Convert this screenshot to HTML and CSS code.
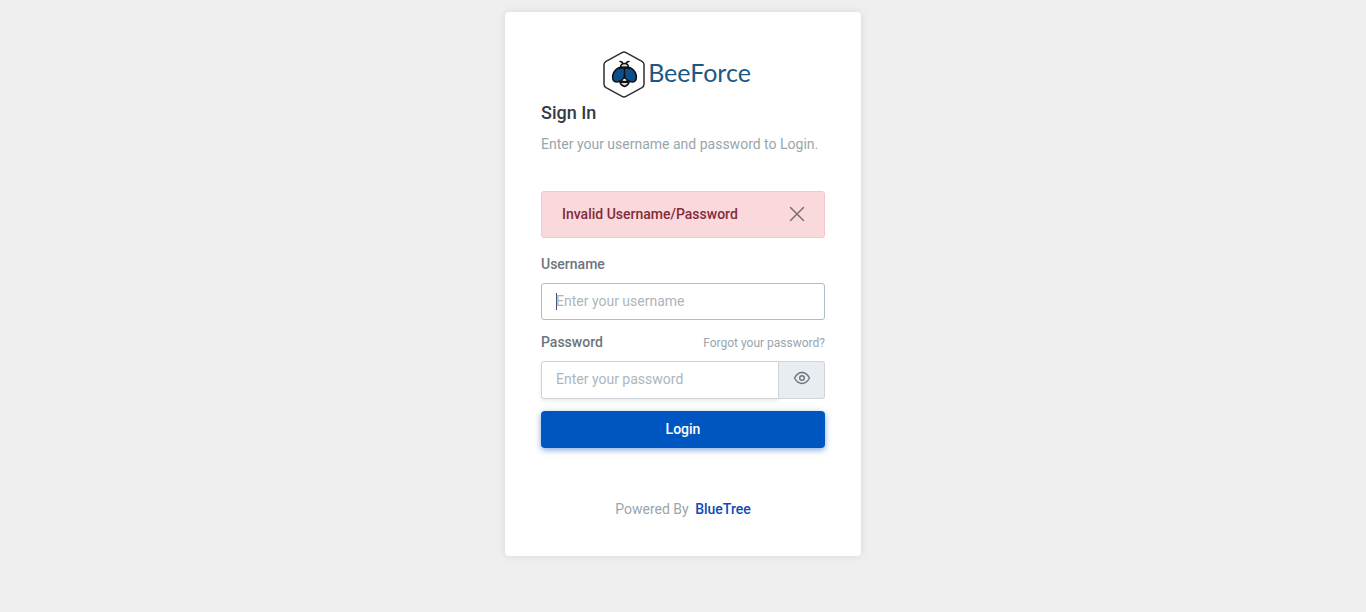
FILE: index.html
```html
<!DOCTYPE html>
<html lang="en">
<head>
<meta charset="utf-8">
<meta name="viewport" content="width=device-width, initial-scale=1">
<title>Sign In | BeeForce</title>
<link rel="stylesheet" href="styles.css">
</head>
<body>
<main class="card">
  <div class="logo">
    <svg class="logo-mark" viewBox="0 0 42 48" aria-hidden="true">
      <path d="M19 2.600Q21 1.500 23 2.600L39 11.400Q41 12.500 41 14.800V34.200Q41 36.500 39 37.600L23 46.400Q21 47.500 19 46.400L3 37.600Q1 36.500 1 34.200V14.800Q1 12.500 3 11.400Z" fill="#fff" stroke="#303033" stroke-width="1.500"/>
      <path d="M17 11.500Q19.500 11.500 20 14M26 11.500Q23.500 11.500 23 14" fill="none" stroke="#111" stroke-width="1.500" stroke-linecap="round"/>
      <path d="M17.500 17.500Q17.500 13.500 21.500 13.500Q25.500 13.500 25.500 17.500Z" fill="#ddd" stroke="#111" stroke-width="1.500"/>
      <path d="M17 28V32.500Q18 35.500 21.500 36.500Q25 35.500 26 32.500V28Z" fill="#ddd" stroke="#111" stroke-width="1.500"/>
      <path d="M17 32H26" stroke="#111" stroke-width="2"/>
      <path d="M21.500 18C15 15.500 10 21 9.600 27C9.400 31 12 32.200 15 31.800C18.500 31.200 21 28.500 21.500 26C22 28.500 24.500 31.200 28 31.800C31 32.200 33.600 31 33.400 27C33 21 28 15.500 21.500 18Z" fill="#0b4f8c" stroke="#111" stroke-width="1.500" stroke-linejoin="round"/>
      <path d="M16 18.500Q21.500 16.500 27 18.500" fill="none" stroke="#111" stroke-width="2"/>
      <path d="M21.500 18V26" stroke="#111" stroke-width="1.500"/>
      <path d="M20 30Q21.500 27.500 23 30Z" fill="#fff"/>
    </svg>
    <span class="logo-name">BeeForce</span>
  </div>
  <h1 class="title">Sign In</h1>
  <p class="intro">Enter your username and password to Login.</p>
  <div class="alert" role="alert">
    <strong class="alert-text">Invalid Username/Password</strong>
    <button class="alert-close" type="button" aria-label="Close">
      <svg class="close-icon" viewBox="0 0 16 16" aria-hidden="true"><path d="M1.500 1.500L14.500 14.500M14.500 1.500L1.500 14.500" fill="none" stroke="currentColor" stroke-width="1.500" stroke-linecap="round"/></svg>
    </button>
  </div>
  <form>
    <div class="label-row"><label for="username">Username</label></div>
    <input class="field" id="username" type="text" placeholder="Enter your username" autofocus>
    <div class="label-row">
      <label for="password">Password</label>
      <a class="forgot" href="#">Forgot your password?</a>
    </div>
    <div class="field-group">
      <input class="field field-joined" id="password" type="password" placeholder="Enter your password">
      <button class="reveal" type="button" aria-label="Show password">
        <svg class="eye-icon" viewBox="0 0 18 14" aria-hidden="true"><path d="M1.500 7Q4.500 1.500 9 1.500T16.500 7Q13.500 12.500 9 12.500T1.500 7Z" fill="none" stroke="currentColor" stroke-width="1.400" stroke-linejoin="round"/><circle cx="9" cy="7" r="2.300" fill="none" stroke="currentColor" stroke-width="1.400"/></svg>
      </button>
    </div>
    <button class="login" type="submit">Login</button>
  </form>
  <p class="powered">Powered By <a class="brand" href="#">BlueTree</a></p>
</main>
</body>
</html>
```
FILE: styles.css
```css
* { box-sizing: border-box; }

body {
  margin: 0;
  padding: 12px;
  background: #efefef;
  color: #6c757d;
  font: 14px/22px Roboto, sans-serif;
}

.card {
  max-width: 356px;
  margin: 0 auto;
  padding: 38px 36px 36px;
  background: #fff;
  border-radius: 4px;
  box-shadow: 0 0 8px rgba(0, 0, 0, .1);
}

.logo {
  display: flex;
  justify-content: center;
  gap: 3px;
  padding-right: 12px;
}

.logo-mark { width: 42px; height: 48px; }

.logo-name {
  color: #1d5785;
  font: 25px/44px Lato, sans-serif;
}

.title {
  margin: 4px 0 9px;
  color: #313a46;
  font-size: 18px;
  font-weight: 500;
  line-height: 22px;
}

.intro { margin: 0 0 36px; color: #98a6ad; }

.alert {
  display: flex;
  align-items: center;
  justify-content: space-between;
  margin-bottom: 15px;
  padding: 11px 19px 12px 20px;
  background: #fad9dd;
  border: 1px solid #f5c6cb;
  border-radius: 3px;
  color: #832b3a;
}

.alert-text { font-weight: 500; }

.alert-close {
  display: flex;
  padding: 0;
  background: none;
  border: 0;
  color: #7d6d6f;
}

.close-icon { width: 16px; height: 16px; }

.label-row {
  display: flex;
  align-items: baseline;
  justify-content: space-between;
  margin-bottom: 8px;
}

.label-row label { font-weight: 500; }

.forgot { color: #98a6ad; font-size: 12px; line-height: 20px; text-decoration: none; }

.field {
  display: block;
  width: 100%;
  height: 37px;
  margin: 0 0 11px;
  padding: 6px 14px 8px;
  background: #fff;
  border: 1px solid #ced4da;
  border-radius: 3px;
  color: #6c757d;
  font: inherit;
}

.field::placeholder { color: #adb5bd; opacity: 1; }

.field:focus {
  background: linear-gradient(#495057, #495057) 14px 9px / 1px 17px no-repeat #fff;
  border-color: #b1bbc4;
  caret-color: transparent;
  outline: 0;
}

.field-group { display: flex; height: 38px; margin-bottom: 12px; }

.field-joined {
  flex: 1;
  min-width: 0;
  height: auto;
  margin: 0;
  border-radius: 3px 0 0 3px;
  box-shadow: 0 2px 4px rgba(0, 0, 0, .08);
}

.reveal {
  display: flex;
  align-items: center;
  justify-content: center;
  width: 46px;
  padding: 0 0 4px;
  background: #e9edf1;
  border: 1px solid #ced4da;
  border-left: 0;
  border-radius: 0 3px 3px 0;
  color: #6c757d;
}

.eye-icon { width: 18px; height: 14px; }

.login {
  display: block;
  width: 100%;
  height: 37px;
  padding: 0 0 2px;
  background: #0056c1;
  border: 0;
  border-radius: 4px;
  box-shadow: 0 2px 6px rgba(0, 86, 193, .5);
  color: #fff;
  font: inherit;
  font-weight: 500;
}

.powered { margin: 50px 0 0; color: #98a6ad; text-align: center; }

.brand {
  margin-left: 3px;
  color: #0f4bb5;
  font-weight: 500;
  text-decoration: none;
}
```
